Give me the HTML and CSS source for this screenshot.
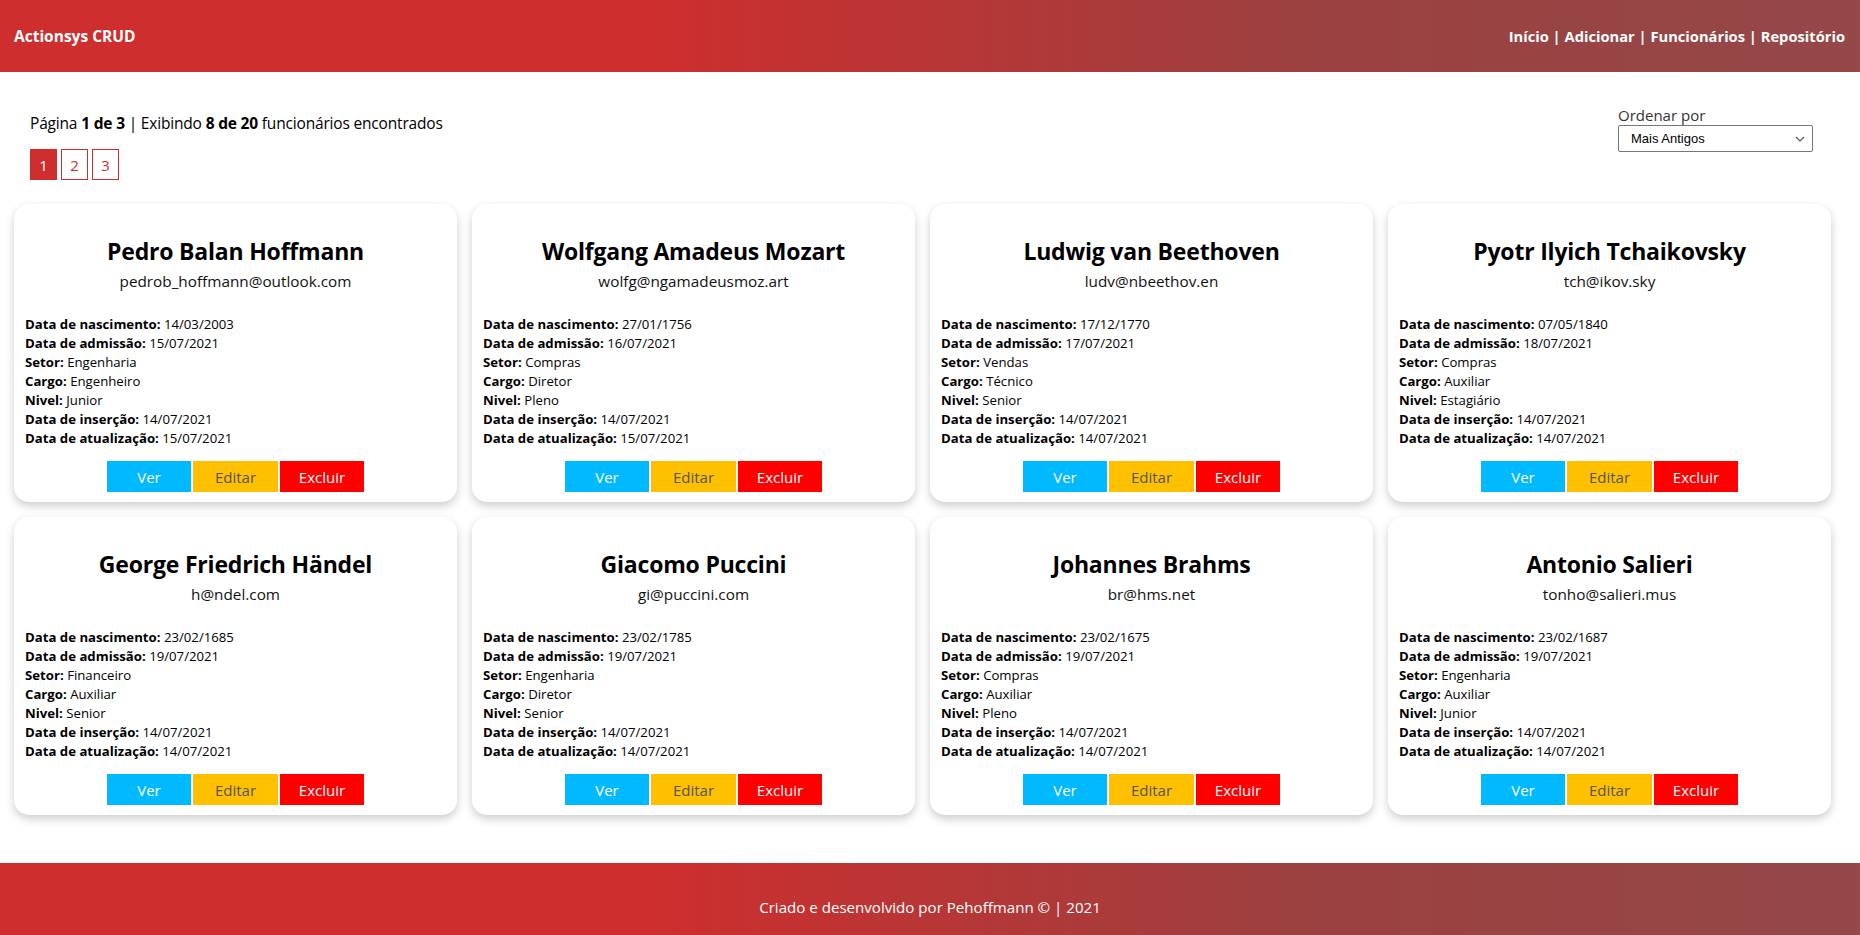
FILE: index.html
```html
<!DOCTYPE html>
<html lang="pt-BR">
<head>
<meta charset="utf-8">
<title>Actionsys CRUD</title>
<link rel="stylesheet" href="styles.css">
</head>
<body>
<header class="topbar">
  <div class="brand">Actionsys CRUD</div>
  <nav class="nav">Início | Adicionar | Funcionários | Repositório</nav>
</header>
<main class="main">
  <div class="toolbar">
    <div class="status">
      <p class="summary">Página <b>1 de 3</b> | Exibindo <b>8 de 20</b> funcionários encontrados</p>
      <div class="pages">
        <span class="page active">1</span>
        <span class="page">2</span>
        <span class="page">3</span>
      </div>
    </div>
    <div class="sort">
      <label class="sort-label">Ordenar por</label>
      <div class="select">Mais Antigos<svg class="chev" width="10" height="6" viewBox="0 0 10 6"><path d="M1 1l4 4 4-4" fill="none" stroke="#555" stroke-width="1.2"/></svg></div>
    </div>
  </div>
  <section class="grid">
    <article class="card">
      <h2 class="name">Pedro Balan Hoffmann</h2>
      <p class="email">pedrob_hoffmann@outlook.com</p>
      <ul class="details">
        <li><b>Data de nascimento:</b> 14/03/2003</li>
        <li><b>Data de admissão:</b> 15/07/2021</li>
        <li><b>Setor:</b> Engenharia</li>
        <li><b>Cargo:</b> Engenheiro</li>
        <li><b>Nivel:</b> Junior</li>
        <li><b>Data de inserção:</b> 14/07/2021</li>
        <li><b>Data de atualização:</b> 15/07/2021</li>
      </ul>
      <div class="actions"><span class="btn ver">Ver</span><span class="btn editar">Editar</span><span class="btn excluir">Excluir</span></div>
    </article>
    <article class="card">
      <h2 class="name">Wolfgang Amadeus Mozart</h2>
      <p class="email">wolfg@ngamadeusmoz.art</p>
      <ul class="details">
        <li><b>Data de nascimento:</b> 27/01/1756</li>
        <li><b>Data de admissão:</b> 16/07/2021</li>
        <li><b>Setor:</b> Compras</li>
        <li><b>Cargo:</b> Diretor</li>
        <li><b>Nivel:</b> Pleno</li>
        <li><b>Data de inserção:</b> 14/07/2021</li>
        <li><b>Data de atualização:</b> 15/07/2021</li>
      </ul>
      <div class="actions"><span class="btn ver">Ver</span><span class="btn editar">Editar</span><span class="btn excluir">Excluir</span></div>
    </article>
    <article class="card">
      <h2 class="name">Ludwig van Beethoven</h2>
      <p class="email">ludv@nbeethov.en</p>
      <ul class="details">
        <li><b>Data de nascimento:</b> 17/12/1770</li>
        <li><b>Data de admissão:</b> 17/07/2021</li>
        <li><b>Setor:</b> Vendas</li>
        <li><b>Cargo:</b> Técnico</li>
        <li><b>Nivel:</b> Senior</li>
        <li><b>Data de inserção:</b> 14/07/2021</li>
        <li><b>Data de atualização:</b> 14/07/2021</li>
      </ul>
      <div class="actions"><span class="btn ver">Ver</span><span class="btn editar">Editar</span><span class="btn excluir">Excluir</span></div>
    </article>
    <article class="card">
      <h2 class="name">Pyotr Ilyich Tchaikovsky</h2>
      <p class="email">tch@ikov.sky</p>
      <ul class="details">
        <li><b>Data de nascimento:</b> 07/05/1840</li>
        <li><b>Data de admissão:</b> 18/07/2021</li>
        <li><b>Setor:</b> Compras</li>
        <li><b>Cargo:</b> Auxiliar</li>
        <li><b>Nivel:</b> Estagiário</li>
        <li><b>Data de inserção:</b> 14/07/2021</li>
        <li><b>Data de atualização:</b> 14/07/2021</li>
      </ul>
      <div class="actions"><span class="btn ver">Ver</span><span class="btn editar">Editar</span><span class="btn excluir">Excluir</span></div>
    </article>
    <article class="card">
      <h2 class="name">George Friedrich Händel</h2>
      <p class="email">h@ndel.com</p>
      <ul class="details">
        <li><b>Data de nascimento:</b> 23/02/1685</li>
        <li><b>Data de admissão:</b> 19/07/2021</li>
        <li><b>Setor:</b> Financeiro</li>
        <li><b>Cargo:</b> Auxiliar</li>
        <li><b>Nivel:</b> Senior</li>
        <li><b>Data de inserção:</b> 14/07/2021</li>
        <li><b>Data de atualização:</b> 14/07/2021</li>
      </ul>
      <div class="actions"><span class="btn ver">Ver</span><span class="btn editar">Editar</span><span class="btn excluir">Excluir</span></div>
    </article>
    <article class="card">
      <h2 class="name">Giacomo Puccini</h2>
      <p class="email">gi@puccini.com</p>
      <ul class="details">
        <li><b>Data de nascimento:</b> 23/02/1785</li>
        <li><b>Data de admissão:</b> 19/07/2021</li>
        <li><b>Setor:</b> Engenharia</li>
        <li><b>Cargo:</b> Diretor</li>
        <li><b>Nivel:</b> Senior</li>
        <li><b>Data de inserção:</b> 14/07/2021</li>
        <li><b>Data de atualização:</b> 14/07/2021</li>
      </ul>
      <div class="actions"><span class="btn ver">Ver</span><span class="btn editar">Editar</span><span class="btn excluir">Excluir</span></div>
    </article>
    <article class="card">
      <h2 class="name">Johannes Brahms</h2>
      <p class="email">br@hms.net</p>
      <ul class="details">
        <li><b>Data de nascimento:</b> 23/02/1675</li>
        <li><b>Data de admissão:</b> 19/07/2021</li>
        <li><b>Setor:</b> Compras</li>
        <li><b>Cargo:</b> Auxiliar</li>
        <li><b>Nivel:</b> Pleno</li>
        <li><b>Data de inserção:</b> 14/07/2021</li>
        <li><b>Data de atualização:</b> 14/07/2021</li>
      </ul>
      <div class="actions"><span class="btn ver">Ver</span><span class="btn editar">Editar</span><span class="btn excluir">Excluir</span></div>
    </article>
    <article class="card">
      <h2 class="name">Antonio Salieri</h2>
      <p class="email">tonho@salieri.mus</p>
      <ul class="details">
        <li><b>Data de nascimento:</b> 23/02/1687</li>
        <li><b>Data de admissão:</b> 19/07/2021</li>
        <li><b>Setor:</b> Engenharia</li>
        <li><b>Cargo:</b> Auxiliar</li>
        <li><b>Nivel:</b> Junior</li>
        <li><b>Data de inserção:</b> 14/07/2021</li>
        <li><b>Data de atualização:</b> 14/07/2021</li>
      </ul>
      <div class="actions"><span class="btn ver">Ver</span><span class="btn editar">Editar</span><span class="btn excluir">Excluir</span></div>
    </article>
  </section>
</main>
<footer class="footer">Criado e desenvolvido por Pehoffmann © | 2021</footer>
</body>
</html>
```

FILE: styles.css
```css
* { box-sizing: border-box; }
html, body { margin: 0; padding: 0; }
body {
  font-family: "Open Sans", "Noto Sans", sans-serif;
  color: #000;
  background: #fff;
  width: 1860px;
  height: 935px;
  display: flex;
  flex-direction: column;
}
.topbar, .footer {
  background: linear-gradient(90deg, #ce2e2e 0%, #ce2e2e 35%, #9c4040 70%, #954848 100%);
  color: #fff;
}
.topbar {
  height: 72px;
  display: flex;
  align-items: center;
  justify-content: space-between;
  padding: 0 15px 0 14px;
  font-weight: 700;
}
.brand { font-size: 15.5px; }
.nav { font-size: 14.7px; }
.main { flex: 1; }
.toolbar {
  display: flex;
  justify-content: space-between;
  padding: 0 47px 0 30px;
  height: 132px;
}
.summary {
  margin: 41px 0 0 0;
  font-size: 15.5px;
  line-height: 20px;
  letter-spacing: -0.18px;
}
.pages {
  display: flex;
  gap: 4px;
  margin-top: 16px;
}
.page {
  width: 27px;
  height: 31px;
  border: 1px solid #ce2e2e;
  color: #ce2e2e;
  display: flex;
  align-items: center;
  justify-content: center;
  font-size: 15px;
}
.page.active { background: #ce2e2e; color: #fff; }
.sort { padding-top: 34px; width: 195px; }
.sort-label {
  display: block;
  font-size: 15px;
  line-height: 19px;
  color: #333;
}
.select {
  height: 27px;
  border: 1px solid #767676;
  border-radius: 2px;
  display: flex;
  align-items: center;
  justify-content: space-between;
  padding: 0 7px 0 12px;
  font-family: "Liberation Sans", Arial, sans-serif;
  font-size: 13px;
  color: #000;
}
.grid {
  display: grid;
  grid-template-columns: repeat(4, 443px);
  gap: 15px;
  padding: 0 0 0 14px;
}
.card {
  height: 298px;
  background: #fff;
  border-radius: 15px;
  box-shadow: 0 4px 10px rgba(0, 0, 0, 0.2);
  padding: 31px 11px 0 11px;
  display: flex;
  flex-direction: column;
}
.name {
  margin: 0;
  text-align: center;
  font-size: 23px;
  line-height: 32px;
  font-weight: 700;
  letter-spacing: -0.2px;
}
.email {
  margin: 3px 0 0 0;
  text-align: center;
  font-size: 15.3px;
  line-height: 22px;
  color: #111;
}
.details {
  list-style: none;
  margin: 23px 0 0 0;
  padding: 0;
  font-size: 13.2px;
  line-height: 19px;
}
.actions {
  display: flex;
  justify-content: center;
  gap: 2px;
  margin-top: 13px;
}
.btn {
  width: 84px;
  height: 31px;
  display: flex;
  align-items: center;
  justify-content: center;
  font-size: 15px;
  color: #fff;
}
.btn.editar { width: 85px; }
.ver { background: #00b9ff; }
.editar { background: #ffc000; color: #555 !important; }
.excluir { background: #ff0000; }
.footer {
  height: 72px;
  display: flex;
  align-items: center;
  justify-content: center;
  padding-top: 16px;
  font-size: 15.1px;
}
```
